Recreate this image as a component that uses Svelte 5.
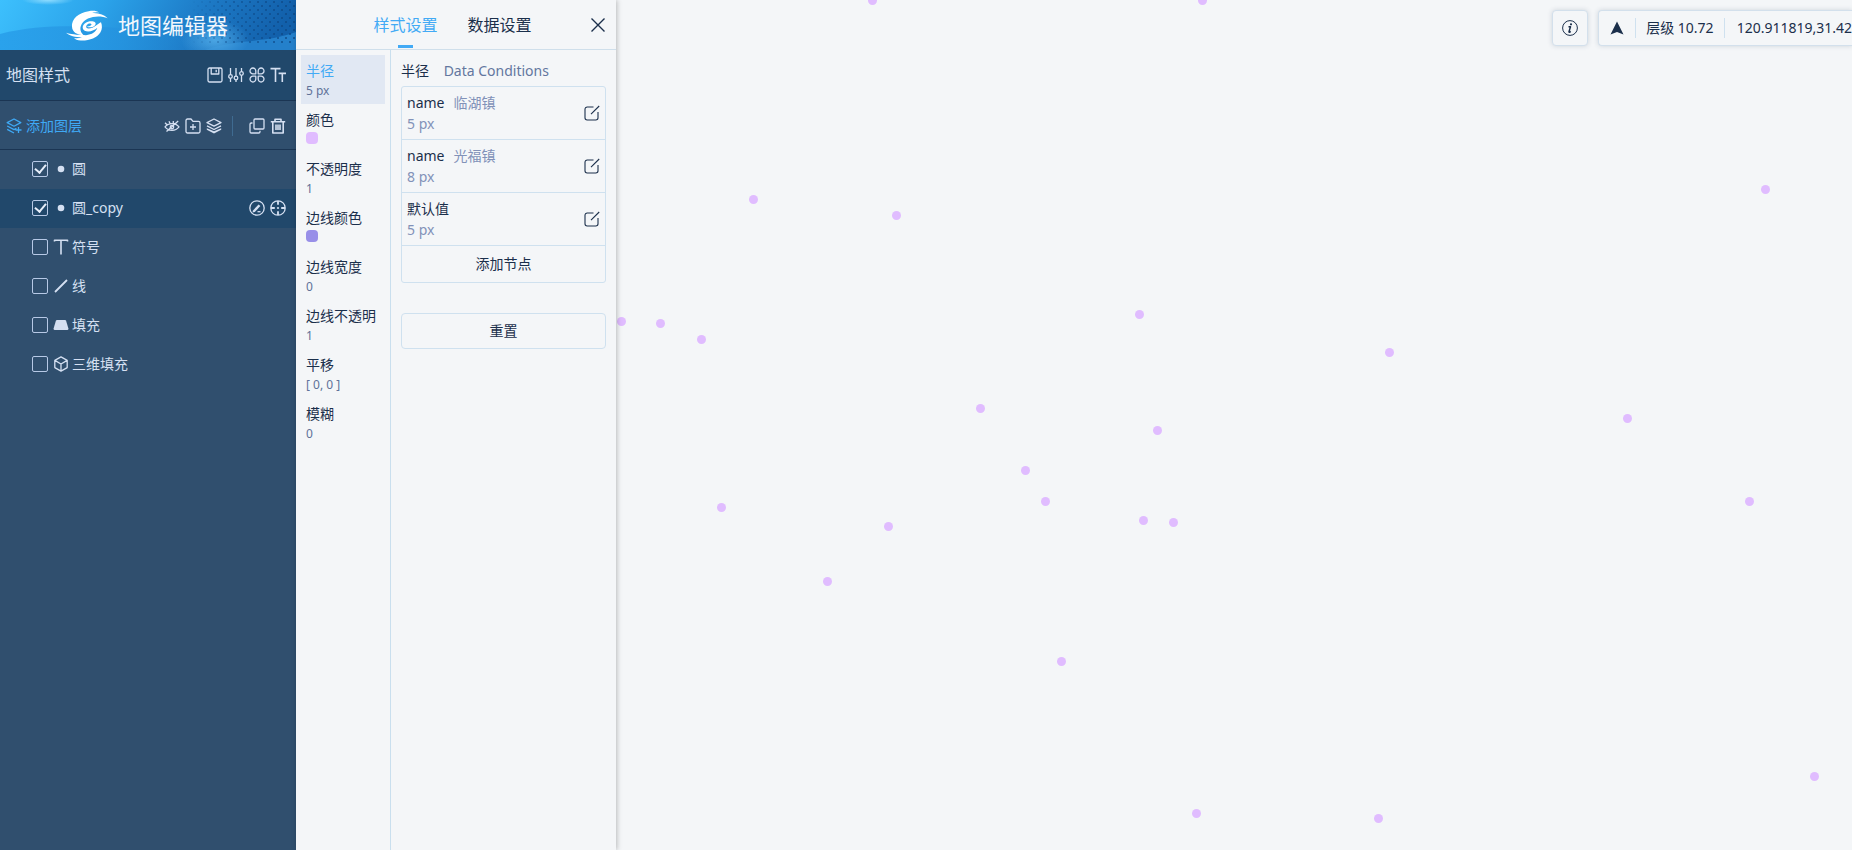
<script>
  const layers = $state([
    { name: '圆', kind: 'circle', on: true },
    { name: '圆_copy', kind: 'circle', on: true },
    { name: '符号', kind: 'symbol', on: false },
    { name: '线', kind: 'line', on: false },
    { name: '填充', kind: 'fill', on: false },
    { name: '三维填充', kind: 'cube', on: false }
  ]);
  let selected = $state(1);

  const props = [
    { label: '半径', value: '5 px' },
    { label: '颜色', color: '#e0bcff' },
    { label: '不透明度', value: '1' },
    { label: '边线颜色', color: '#988fe8' },
    { label: '边线宽度', value: '0' },
    { label: '边线不透明', value: '1' },
    { label: '平移', value: '[ 0, 0 ]' },
    { label: '模糊', value: '0' }
  ];
  let activeProp = $state(0);

  const conditions = [
    { field: 'name', match: '临湖镇', value: '5 px' },
    { field: 'name', match: '光福镇', value: '8 px' },
    { field: '默认值', match: '', value: '5 px' }
  ];

  const points = [
    [256, 0], [586, 0], [137, 199], [280, 215], [1149, 189], [523, 314], [773, 352],
    [5, 321], [44, 323], [85, 339], [364, 408], [541, 430], [1011, 418], [409, 470],
    [429, 501], [105, 507], [272, 526], [527, 520], [557, 522], [1133, 501], [211, 581],
    [445, 661], [1198, 776], [580, 813], [762, 818]
  ];
</script>

{#snippet icon(name)}
  <svg class="icon" viewBox="0 0 16 16" aria-hidden="true">
    {#if name === 'save'}
      <rect x="1" y="1" width="14" height="14" rx="1.5" />
      <path d="M4.2 1v6h7.6V1M9.2 2.8v2.4" />
    {:else if name === 'sliders'}
      <path d="M2.5 1v6.6M2.5 11.4V15M8 1v8.2M8 13v2M13.5 1v3.6M13.5 8.4V15" />
      <circle cx="2.5" cy="9.5" r="1.8" /><circle cx="8" cy="11" r="1.8" /><circle cx="13.5" cy="6.5" r="1.8" />
    {:else if name === 'grid'}
      <path d="M6.8 6.8H4A2.9 2.9 0 1 1 6.8 4zM9.2 6.8V4A2.9 2.9 0 1 1 12 6.8zM6.8 9.2V12A2.9 2.9 0 1 1 4 9.2zM9.2 9.2H12A2.9 2.9 0 1 1 9.2 12z" />
    {:else if name === 'type'}
      <path stroke-width="1.6" d="M.5 1.6h10M5.5 1.6V15M8.6 6.4H16M12.3 6.4V15" />
    {:else if name === 'add-layer'}
      <path d="M8 1 1.2 4.6 8 8.2l6.8-3.6zM1.200 8 8 11.600l2.400-1.300M1.200 11.400 8 15M12.500 9v6M9.500 12h6" />
    {:else if name === 'eye-off'}
      <path d="M1 8.800C4.500 4.500 11.500 4.500 15 8.800 11.500 13.400 4.500 13.400 1 8.800zM14.200 3 2.500 13.600M1 4.800 3 6.800M5 3.300 6 5.600M9.300 3v2.200" />
      <circle cx="8" cy="9" r="1.700" />
    {:else if name === 'folder'}
      <path d="M1 13.500V2.500A1.500 1.500 0 0 1 2.500 1H6l2 2.400h5.500A1.500 1.500 0 0 1 15 4.900v8.600a1.500 1.500 0 0 1-1.500 1.500h-11A1.500 1.500 0 0 1 1 13.500zM8 6v6M5 9h6" />
    {:else if name === 'layers'}
      <path d="M8 1 1 4.600l7 3.600 7-3.600zM1 7.900l7 3.600 7-3.600" />
      <path class="solid" d="M.8 10.200 8 13.200l7.200-3v1.600L8 15.600.8 11.800z" />
    {:else if name === 'copy'}
      <rect x="5" y="1" width="10" height="10" rx="1" />
      <path d="M3.500 5H2.300A1.300 1.300 0 0 0 1 6.300v7.400A1.300 1.300 0 0 0 2.300 15h7.400a1.300 1.300 0 0 0 1.300-1.300V12.700" />
    {:else if name === 'trash'}
      <path stroke-width="1.600" d="M.8 3.700h14.400M5 3.400V1.200h6v2.200M2.800 3.700V15h10.400V3.700M6 6.500v5.500M8 6.500v5.500M10 6.500v5.500" />
    {:else if name === 'circle'}
      <circle class="solid" cx="8" cy="8" r="3.300" />
    {:else if name === 'symbol'}
      <path stroke-width="1.600" d="M1.500 2.600V1.200h13v1.400M8 1.200V15.500" />
    {:else if name === 'line'}
      <path stroke-width="1.800" d="M2 14 14 2" />
    {:else if name === 'fill'}
      <path class="solid" d="M4 3h8q.8 0 1.100.8L15.400 11.500q.2 1.500-1.200 1.500H1.800Q.4 13 .6 11.500L2.900 3.800Q3.200 3 4 3z" />
    {:else if name === 'cube'}
      <path d="M8 .9 14.200 4.400v7.200L8 15.100 1.800 11.600V4.400zM1.800 4.400 8 8l6.200-3.600M8 8v7" />
    {:else if name === 'edit-style'}
      <circle cx="8" cy="8" r="7.200" />
      <path class="solid" d="m4 10.400 5.600-6 1.800 1.600-5.600 6-2.400.6z" />
      <path d="M8.500 11.700h3" />
    {:else if name === 'target'}
      <circle cx="8" cy="8" r="7.200" />
      <path stroke-width="1.800" d="M8 1v3.800M8 11.200V15M1 8h3.800M11.200 8H15" />
      <circle class="solid" cx="8" cy="8" r="1.100" />
    {:else if name === 'edit'}
      <path stroke-width="1.100" d="M9.500 2H3.200A2.200 2.200 0 0 0 1 4.200v8.600A2.200 2.200 0 0 0 3.200 15h8.600a2.200 2.200 0 0 0 2.200-2.200V7M7 9.200 15.200 1" />
    {:else if name === 'close'}
      <path stroke-width="1.400" d="m1.500 1.500 13 13m0-13-13 13" />
    {:else if name === 'info'}
      <circle cx="8" cy="8" r="7.400" stroke-width="1" />
      <path stroke-width="1.500" d="M6.500 6.700H8.500L7 11.600q-.2 1 .8.500l.9-.7" />
      <circle class="solid" cx="9" cy="4.300" r="1.100" />
    {:else if name === 'north'}
      <path class="solid" d="M8 1.500 14.500 14.500 8 12 1.500 14.500z" />
    {/if}
  </svg>
{/snippet}

<main class="app">
  <aside class="sidebar">
    <header class="brand">
      <svg class="backdrop" viewBox="0 0 296 50" preserveAspectRatio="none" aria-hidden="true">
        <defs>
          <linearGradient id="sky" x1="0" y1="0" x2="1" y2="0.1">
            <stop offset="0" stop-color="#3dc0fd" />
            <stop offset=".35" stop-color="#2ba3ea" />
            <stop offset=".7" stop-color="#1d7ac6" />
            <stop offset="1" stop-color="#1260ab" />
          </linearGradient>
          <linearGradient id="wave" x1="0" y1="0" x2="1" y2="0">
            <stop offset="0" stop-color="#2aa2ec" />
            <stop offset=".5" stop-color="#2593df" stop-opacity=".8" />
            <stop offset="1" stop-color="#1f7cc8" stop-opacity="0" />
          </linearGradient>
          <radialGradient id="glow">
            <stop offset="0" stop-color="#8fdcff" />
            <stop offset="1" stop-color="#8fdcff" stop-opacity="0" />
          </radialGradient>
          <radialGradient id="haze">
            <stop offset="0" stop-color="#4ba6e4" />
            <stop offset="1" stop-color="#4ba6e4" stop-opacity="0" />
          </radialGradient>
          <pattern id="dots" width="8" height="8" patternUnits="userSpaceOnUse">
            <circle cx="2" cy="2" r="1" fill="#0d4684" />
            <circle cx="6" cy="6" r="1" fill="#0d4684" />
          </pattern>
          <linearGradient id="fade" x1="0" y1="0" x2="1" y2="0">
            <stop offset="0" stop-color="#000" />
            <stop offset=".4" stop-color="#999" />
            <stop offset="1" stop-color="#eee" />
          </linearGradient>
          <mask id="dotmask"><rect x="190" width="106" height="44" fill="url(#fade)" /></mask>
        </defs>
        <rect width="296" height="50" fill="url(#sky)" />
        <path d="M0 34C40 24 80 26 120 28S200 20 240 10v40H0z" fill="url(#wave)" />
        <path d="M296 32C262 44 240 38 205 50h91z" fill="#2480cb" />
        <ellipse cx="48" cy="0" rx="26" ry="5" fill="url(#glow)" />
        <ellipse cx="215" cy="40" rx="34" ry="20" fill="url(#haze)" />
        <rect x="190" width="106" height="44" fill="url(#dots)" mask="url(#dotmask)" />
      </svg>
      <svg class="logo" viewBox="0 0 126 92" aria-hidden="true">
        <path d="M125 24C108 17 84 17 66 25 48 34 41 48 44 62 46 68 49 72 53 75 33 75 19 66 18 50 16 26 38 7 68 3 82 0 92 2 100 7 90 6 82 7 76 9 98 7 114 14 125 24z" />
        <path d="M0 68C20 74 44 75 60 75 78 74 90 65 94 53 86 61 68 68 56 62 45 55 50 40 66 35 80 31 93 36 88 44 84 52 70 53 62 50 72 49 80 44 75 41 68 38 59 45 61 52 65 58 80 54 90 46 98 40 103 36 105 36 109 46 109 57 103 67 93 83 70 92 44 91 34 90 28 87 24 84 34 85 42 84 48 82 28 82 10 77 0 68z" />
      </svg>
      <h1>地图编辑器</h1>
    </header>

    <div class="bar style-bar">
      <h2>地图样式</h2>
      <div class="tools">
        <button aria-label="保存">{@render icon('save')}</button>
        <button aria-label="调整">{@render icon('sliders')}</button>
        <button aria-label="图标">{@render icon('grid')}</button>
        <button aria-label="字体">{@render icon('type')}</button>
      </div>
    </div>

    <div class="bar layer-bar">
      <button class="add">{@render icon('add-layer')}添加图层</button>
      <div class="tools">
        <button aria-label="隐藏">{@render icon('eye-off')}</button>
        <button aria-label="新建分组">{@render icon('folder')}</button>
        <button aria-label="图层">{@render icon('layers')}</button>
        <span class="divider"></span>
        <button aria-label="复制">{@render icon('copy')}</button>
        <button aria-label="删除">{@render icon('trash')}</button>
      </div>
    </div>

    <ul class="layers">
      {#each layers as layer, i}
        <li class:selected={selected === i}>
          <label>
            <input type="checkbox" bind:checked={layer.on} />
            {@render icon(layer.kind)}
            <span>{layer.name}</span>
          </label>
          {#if selected === i}
            <div class="tools">
              <button aria-label="编辑">{@render icon('edit-style')}</button>
              <button aria-label="定位">{@render icon('target')}</button>
            </div>
          {/if}
        </li>
      {/each}
    </ul>
  </aside>

  <section class="panel">
    <header class="tabs">
      <button class="tab active">样式设置</button>
      <button class="tab">数据设置</button>
      <button class="close" aria-label="关闭">{@render icon('close')}</button>
    </header>
    <div class="content">
      <nav class="props">
        {#each props as prop, i}
          <button class:active={activeProp === i} onclick={() => (activeProp = i)}>
            <span class="label">{prop.label}</span>
            {#if prop.color}
              <span class="swatch" style:background={prop.color}></span>
            {:else}
              <span class="value">{prop.value}</span>
            {/if}
          </button>
        {/each}
      </nav>
      <div class="detail">
        <h3>半径 <span>Data Conditions</span></h3>
        <div class="conditions">
          {#each conditions as c}
            <div class="condition">
              <div>
                <p>{c.field}{#if c.match}<span>{c.match}</span>{/if}</p>
                <p class="amount">{c.value}</p>
              </div>
              <button aria-label="编辑条件">{@render icon('edit')}</button>
            </div>
          {/each}
          <button class="add-node">添加节点</button>
        </div>
        <button class="reset">重置</button>
      </div>
    </div>
  </section>

  <section class="map">
    {#each points as [x, y]}
      <span class="point" style:left="{x}px" style:top="{y}px"></span>
    {/each}
    <div class="status">
      <button class="card info" aria-label="信息">{@render icon('info')}</button>
      <div class="card readout">
        <button class="north" aria-label="指北">{@render icon('north')}</button>
        <span class="zoom">层级 10.72</span>
        <span class="coords">120.911819,31.42</span>
      </div>
    </div>
  </section>
</main>

<style>
  :global(body) {
    margin: 0;
  }
  .app {
    display: flex;
    height: 100vh;
    overflow: hidden;
    font: 14px/20px "Noto Sans", "Noto Sans CJK SC", sans-serif;
    color: #1b2f4b;
    background: #f4f6f8;
  }
  .app :global(*) {
    box-sizing: border-box;
  }
  button {
    padding: 0;
    border: 0;
    background: none;
    font: inherit;
    color: inherit;
    cursor: pointer;
  }
  h1, h2, h3, p, ul {
    margin: 0;
    padding: 0;
    font-weight: 400;
  }
  .icon {
    display: block;
    flex: none;
    width: 16px;
    height: 16px;
    fill: none;
    stroke: currentColor;
    stroke-width: 1.3;
    stroke-linejoin: round;
  }
  .solid {
    fill: currentColor;
    stroke: none;
  }

  .sidebar {
    flex: none;
    width: 296px;
    background: #304f6e;
    color: #d5e0f2;
  }
  .brand {
    position: relative;
    display: flex;
    align-items: center;
    justify-content: center;
    gap: 10px;
    height: 50px;
    padding-right: 2px;
  }
  .backdrop {
    position: absolute;
    inset: 0;
    width: 100%;
    height: 100%;
  }
  .logo {
    position: relative;
    width: 42px;
    height: 31px;
    fill: #fff;
  }
  h1 {
    position: relative;
    font-size: 22px;
    line-height: 32px;
    color: #f1f7fd;
  }
  .bar {
    display: flex;
    align-items: center;
    justify-content: space-between;
    padding: 0 10px 0 6px;
    border-bottom: 1px solid #1b3553;
  }
  .style-bar {
    height: 51px;
    background: #21486b;
  }
  .layer-bar {
    height: 49px;
    padding-top: 2px;
  }
  h2 {
    font-size: 16px;
    line-height: 24px;
  }
  .tools {
    display: flex;
    align-items: center;
    gap: 5px;
  }
  .divider {
    width: 1px;
    height: 20px;
    margin: 0 11px 0 5px;
    background: #3f6b91;
  }
  .add {
    display: flex;
    align-items: center;
    gap: 4px;
    color: #3fa9f5;
  }
  .layers {
    list-style: none;
  }
  li {
    display: flex;
    align-items: center;
    justify-content: space-between;
    height: 39px;
    padding: 0 10px 2px 32px;
  }
  li.selected {
    background: #21486b;
  }
  label {
    display: flex;
    align-items: center;
    gap: 4px;
  }
  input {
    appearance: none;
    display: grid;
    place-items: center;
    width: 16px;
    height: 16px;
    margin: 0 1px 0 0;
    border: 1px solid #b7c9e6;
    border-radius: 2px;
  }
  input:checked::after {
    content: "";
    width: 5px;
    height: 9px;
    margin-bottom: 3px;
    border: solid #e6eefa;
    border-width: 0 2px 2px 0;
    transform: rotate(40deg);
  }
  label span {
    padding-top: 1px;
    margin-left: -1px;
  }

  .panel {
    z-index: 1;
    display: flex;
    flex-direction: column;
    flex: none;
    width: 320px;
    background: #f4f6f8;
    box-shadow: 1px 0 5px rgba(0, 0, 0, .25);
  }
  .tabs {
    position: relative;
    display: flex;
    justify-content: center;
    gap: 30px;
    height: 50px;
    padding: 1px 7px 0 0;
    border-bottom: 1px solid #cfdfeb;
    font-size: 16px;
  }
  .tab {
    position: relative;
  }
  .tab.active {
    color: #42aaf5;
  }
  .tab.active::after {
    content: "";
    position: absolute;
    left: 50%;
    bottom: 1px;
    width: 15px;
    height: 3px;
    margin-left: -7px;
    background: #42aaf5;
  }
  .close {
    position: absolute;
    top: 17px;
    right: 10px;
  }
  .content {
    display: flex;
    flex: 1;
  }
  .props {
    flex: none;
    width: 95px;
    padding: 5px 5px 0;
    border-right: 1px solid #c9dfee;
  }
  .props button {
    display: flex;
    flex-direction: column;
    align-items: flex-start;
    width: 100%;
    height: 49px;
    padding: 6px 5px 0;
    white-space: nowrap;
    text-align: left;
  }
  .props button.active {
    background: #e1e8f3;
  }
  .props .active .label {
    color: #42aaf5;
  }
  .value {
    font-size: 12px;
    color: #5f7299;
  }
  .swatch {
    width: 12px;
    height: 12px;
    margin-top: 2px;
    border-radius: 4px;
  }
  .detail {
    flex: 1;
    padding: 11px 10px;
  }
  h3 {
    font-size: 14px;
    line-height: 20px;
    margin-bottom: 5px;
  }
  h3 span {
    margin-left: 11px;
    color: #63779f;
  }
  .conditions {
    border: 1px solid #cfe1ef;
    border-radius: 3px;
  }
  .condition {
    display: flex;
    align-items: center;
    justify-content: space-between;
    height: 53px;
    padding: 0 5px;
    border-bottom: 1px solid #cfe1ef;
  }
  .condition p {
    line-height: 21px;
  }
  .condition p span {
    margin-left: 9px;
    color: #8292b8;
  }
  .condition .amount {
    color: #8292b8;
  }
  .add-node {
    width: 100%;
    height: 36px;
  }
  .reset {
    width: 100%;
    height: 36px;
    margin-top: 30px;
    border: 1px solid #cfe1ef;
    border-radius: 4px;
  }

  .map {
    position: relative;
    flex: 1;
    min-width: 0;
    overflow: hidden;
  }
  .point {
    position: absolute;
    width: 9px;
    height: 9px;
    margin: -4px 0 0 -4px;
    border-radius: 50%;
    background: #e0bcff;
  }
  .status {
    position: absolute;
    top: 10px;
    right: 0;
    display: flex;
    gap: 10px;
    white-space: nowrap;
  }
  .card {
    display: flex;
    align-items: center;
    height: 36px;
    border: 1px solid #d3e0ec;
    border-radius: 4px;
    background: #f4f6f8;
    box-shadow: 0 0 5px rgba(40, 60, 90, .18);
  }
  .info {
    justify-content: center;
    width: 36px;
  }
  .readout {
    border-right: 0;
    border-radius: 4px 0 0 4px;
  }
  .north {
    padding: 4px 10px;
  }
  .zoom {
    padding: 0 10px;
    border-left: 1px solid #cfe1ef;
  }
  .coords {
    padding-left: 12px;
    border-left: 1px solid #cfe1ef;
  }
</style>
